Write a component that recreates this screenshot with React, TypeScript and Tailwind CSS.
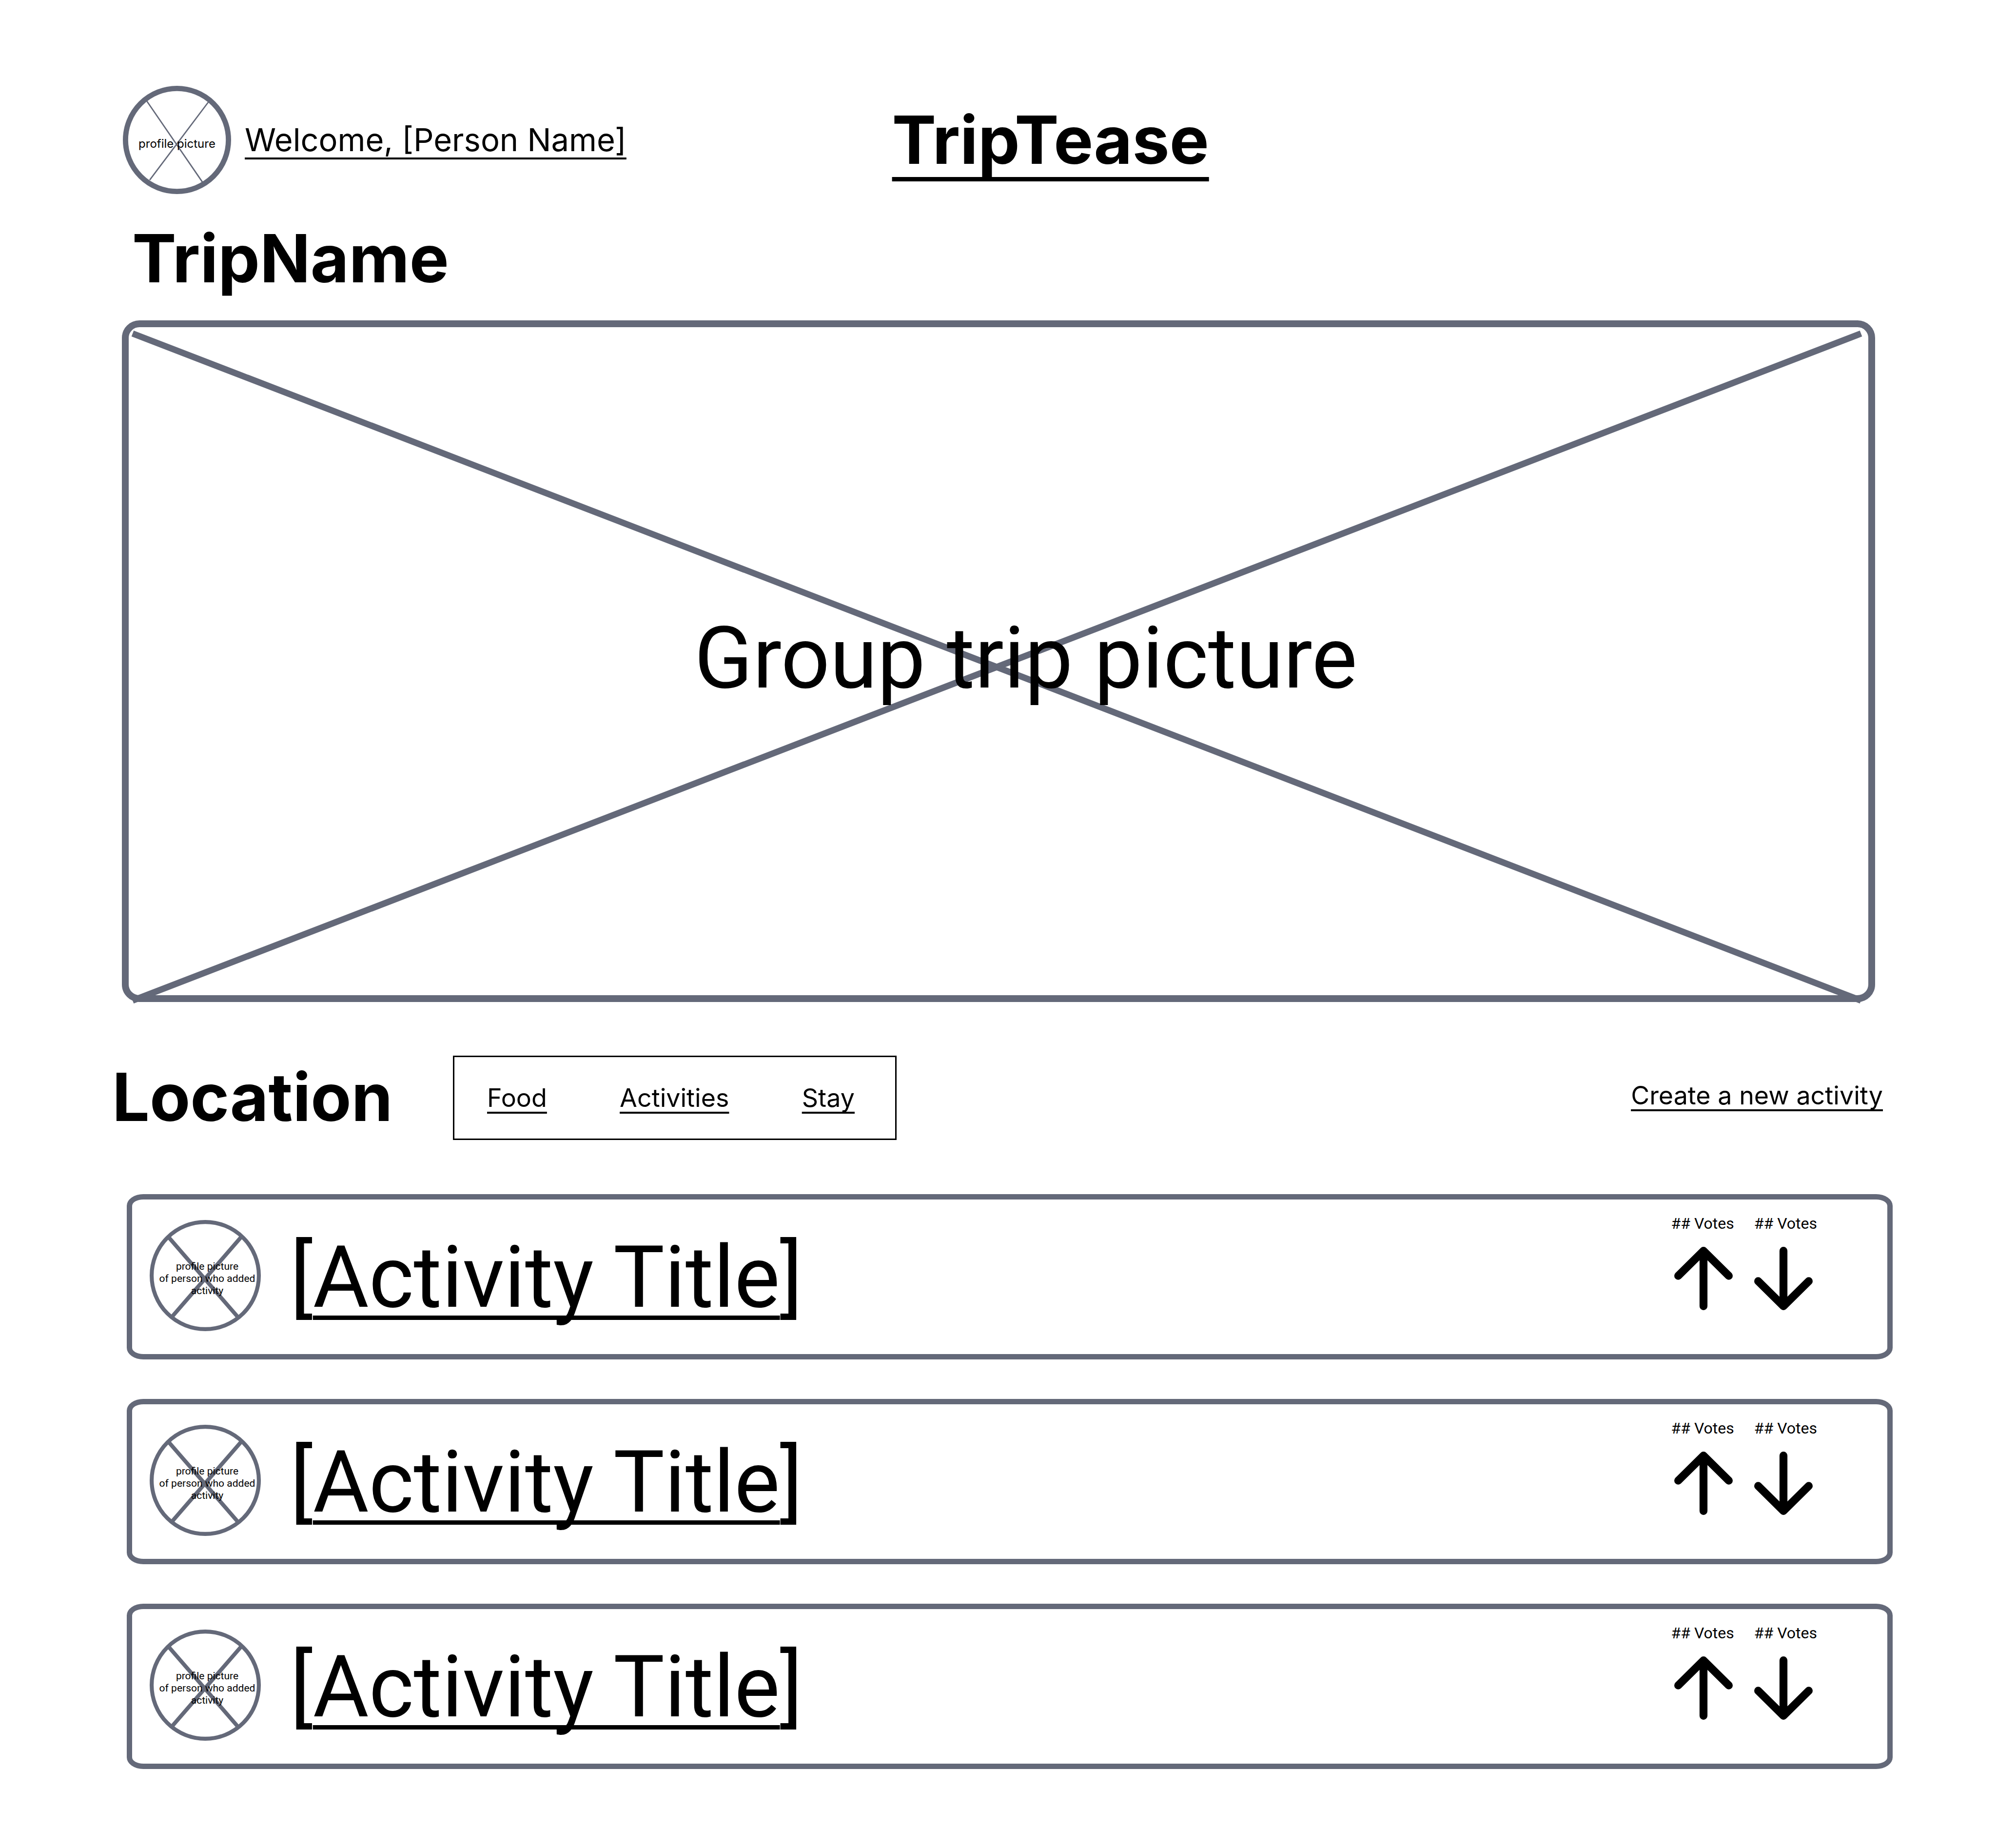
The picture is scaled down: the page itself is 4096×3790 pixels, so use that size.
const INK = "#646979";

function ProfilePicture() {
  return (
    <div className="relative flex size-[222px] shrink-0 items-center justify-center">
      <svg className="absolute inset-0 size-full" viewBox="0 0 246 246" fill="none" stroke={INK} aria-hidden="true">
        <circle cx="123" cy="123" r="117" strokeWidth="12" />
        <path d="M54 34 181 219M195 36 61 214" strokeWidth="3" />
      </svg>
      <span className="relative pt-4 text-[24px] leading-8 whitespace-nowrap">profile picture</span>
    </div>
  );
}

function AuthorPicture() {
  return (
    <div className="relative flex size-[228px] shrink-0 items-center justify-center">
      <svg className="absolute inset-0 size-full" viewBox="0 0 252 252" fill="none" stroke={INK} strokeWidth="9" aria-hidden="true">
        <circle cx="126" cy="126" r="121.5" />
        <path d="M42 38 200 220M208 38 50 220" />
      </svg>
      <span className="relative pt-3 pl-2 text-center text-[21px] leading-[25px] whitespace-nowrap">
        profile picture
        <br />
        of person who added
        <br />
        activity
      </span>
    </div>
  );
}

function Vote({ direction }: { direction: "up" | "down" }) {
  const up = direction === "up";
  return (
    <div className="flex flex-col items-center gap-[29px]">
      <span className="text-[32px] leading-[38px] whitespace-nowrap">## Votes</span>
      <button type="button" aria-label={up ? "Vote up" : "Vote down"} className={up ? "pl-1" : "pr-2"}>
        <svg
          className="h-[130px] w-[120px]"
          viewBox="0 0 133 144"
          fill="none"
          stroke="black"
          strokeWidth="18"
          strokeLinecap="round"
          strokeLinejoin="round"
          aria-hidden="true"
        >
          {up ? <path d="M66.5 135V9M9 66 66.5 9 124 66" /> : <path d="M66.5 9V135M9 78 66.5 135 124 78" />}
        </svg>
      </button>
    </div>
  );
}

function ActivityCard() {
  return (
    <li className="flex h-[339px] items-start rounded-[34px/24px] border-[11px] border-[#646979] pr-[144px] pl-9">
      <div className="pt-[42px]">
        <AuthorPicture />
      </div>
      <h2 className="grow pt-[57px] pl-[60px] text-[176px] leading-[206px] whitespace-nowrap">
        [
        <a href="#activity" className="underline decoration-[9px] underline-offset-[18px] [text-decoration-skip-ink:none]">
          Activity Title
        </a>
        ]
      </h2>
      <div className="flex gap-[41px] pt-[30px]">
        <Vote direction="up" />
        <Vote direction="down" />
      </div>
    </li>
  );
}

export default function App() {
  return (
    <main className="min-h-screen bg-white pt-44 pr-[214px] pb-40 pl-[230px] font-[Roboto,sans-serif] text-black">
      <header className="grid grid-cols-[9fr_auto_8fr] items-center pl-[22px] font-[Inter,sans-serif]">
        <div className="flex items-center gap-7">
          <ProfilePicture />
          <a href="#profile" className="text-[65px] leading-[80px] whitespace-nowrap underline decoration-4 underline-offset-[13px] [text-decoration-skip-ink:none]">
            Welcome, [Person Name]
          </a>
        </div>
        <a href="#home" className="text-[136px] leading-[164px] font-bold underline decoration-[9px] underline-offset-[27px] [text-decoration-skip-ink:none]">
          TripTease
        </a>
      </header>

      <h1 className="mt-[50px] pl-[41px] font-[Inter,sans-serif] text-[136px] leading-[164px] font-bold">TripName</h1>

      <section className="relative mt-[45px] mr-9 ml-5 flex h-[1398px] items-center justify-center rounded-[36px] border-[14px] border-[#646979]">
        <svg className="absolute inset-0 size-full overflow-visible" viewBox="0 0 3568 1370" preserveAspectRatio="none" fill="none" stroke={INK} strokeWidth="13" aria-hidden="true">
          <path d="M8 13 3553 1381M3553 13 8 1381" />
        </svg>
        <p className="relative pb-3 pl-[112px] text-[176px] leading-[206px]">Group trip picture</p>
      </section>

      <div className="mt-[110px] flex items-center">
        <h2 className="w-[699px] pb-1 font-[Inter,sans-serif] text-[136px] leading-[164px] font-bold">Location</h2>
        <nav className="flex h-[173px] w-[910px] items-center justify-between border-[3px] border-black pr-[83px] pl-[67px] font-[Inter,sans-serif] text-[52px] leading-[64px]">
          <a href="#food" className="underline decoration-4 underline-offset-[10px] [text-decoration-skip-ink:none]">Food</a>
          <a href="#activities" className="underline decoration-4 underline-offset-[10px] [text-decoration-skip-ink:none]">Activities</a>
          <a href="#stay" className="underline decoration-4 underline-offset-[10px] [text-decoration-skip-ink:none]">Stay</a>
        </nav>
        <a href="#create" className="mr-5 mb-[10px] ml-auto font-[Inter,sans-serif] text-[52px] leading-[64px] underline decoration-4 underline-offset-[10px] [text-decoration-skip-ink:none]">
          Create a new activity
        </a>
      </div>

      <ul className="mt-[111px] ml-[30px] flex flex-col gap-[81px]">
        <ActivityCard />
        <ActivityCard />
        <ActivityCard />
      </ul>
    </main>
  );
}
